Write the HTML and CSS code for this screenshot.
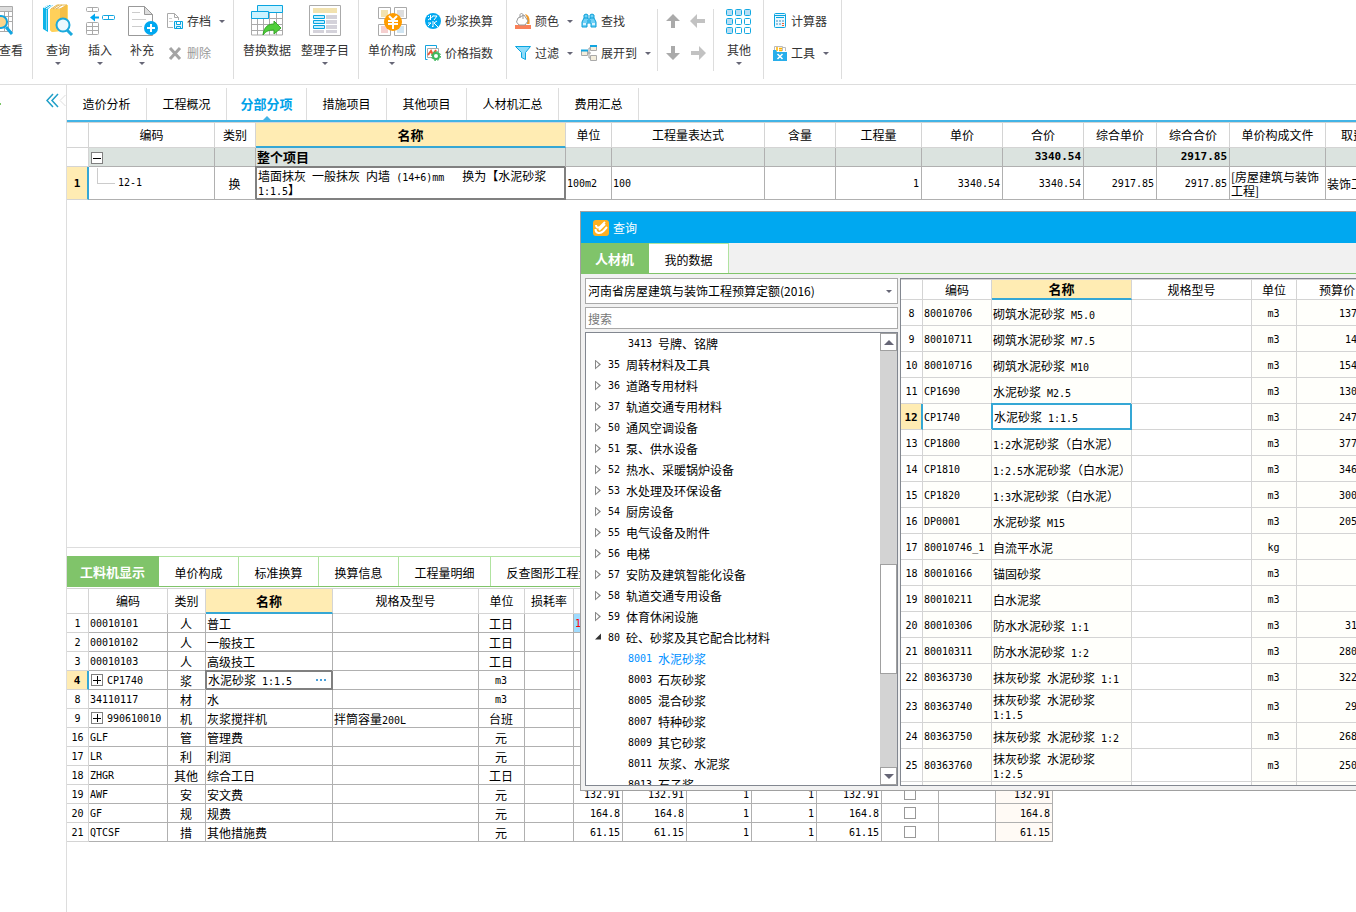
FILE: index.html
```html
<!DOCTYPE html>
<html lang="zh-CN">
<head>
  <meta charset="UTF-8">
  <meta name="viewport" content="width=device-width, initial-scale=1.0">
  <title>分部分项</title>
  <link rel="stylesheet" href="styles.css">
</head>
<body>

  <!-- toolbar -->
  <header class="ribbon">
    <div class="group first">
      <button class="big">
        <svg width="24" height="32" viewBox="0 0 24 32"><path d="M0 2.500h13.500v25H0M0 7.500h13M0 12.500h13M0 17.500h13M5.500 3v24M9.500 3v24" fill="none" stroke="#aaa"/><path d="M0 3h13v4H0z" fill="#ddd"/><circle cx="2" cy="18" r="6" fill="#fbd48a" stroke="#12a5e0" stroke-width="2"/><path d="M7 23l6 7" stroke="#12a5e0" stroke-width="3"/></svg>
        <span>查看</span>
      </button>
    </div>

    <div class="group g-query">
      <button class="big">
        <svg width="32" height="32" viewBox="0 0 32 32"><path d="M1 4l5-3h5l-5 4v23l-5-3z" fill="#0cb3e8"/><path d="M2 4l5-3M4 5l6-4" stroke="#fff"/><path d="M4.500 6v20" stroke="#7fdcf8"/><path d="M9 5l6-4h11v25l-16 2-2-2z" fill="#ffd869"/><path d="M9 5l6-4h10l-7 4z" fill="#fff" stroke="#e8b84d"/><path d="M8 5h10v22l-8 1-2-2z" fill="#ffd05a"/><path d="M18 5l7-4v24l-7 2z" fill="#f5bf48"/><path d="M11 5l6-4M14 5l6-4" stroke="#e0b050"/><circle cx="21" cy="21" r="6.500" fill="#eaf9ff" stroke="#1ba9dc" stroke-width="2"/><path d="M25 26l5 5" stroke="#1ba9dc" stroke-width="3"/></svg>
        <span>查询</span><i class="caret"></i>
      </button>
      <button class="big">
        <svg width="32" height="32" viewBox="0 0 32 32" fill="#fff" stroke="#aaa"><rect x="2.500" y="3.500" width="12" height="4" rx="1"/><path d="M8.500 3.500v4"/><rect x="2.500" y="18.500" width="12" height="12" rx="1"/><path d="M8.500 18.500v12M2.500 22.500h12M2.500 26.500h12"/><rect x="18.500" y="11.500" width="12" height="4" rx="1" stroke="#12a5e0"/><path d="M24.500 11.500v4" stroke="#12a5e0"/><path d="M6 13.500l5-4v3h4v2h-4v3z" fill="#00a8f0" stroke="none"/></svg>
        <span>插入</span><i class="caret"></i>
      </button>
      <button class="big">
        <svg width="32" height="32" viewBox="0 0 32 32"><path d="M2.500 2.500h16l8 8v21h-24z" fill="#fff" stroke="#999"/><path d="M18.500 2.500v8h8z" fill="#ddd" stroke="#999"/><path d="M6 8.500h8M6 15.500h14M6 22.500h10" stroke="#ccc"/><circle cx="25" cy="24" r="7" fill="#00a8f0"/><path d="M25 20v8M21 24h8" stroke="#fff" stroke-width="2"/></svg>
        <span>补充</span><i class="caret"></i>
      </button>
      <div class="small-col">
        <button class="small">
          <svg width="16" height="16" viewBox="0 0 16 16"><path d="M6 14.500H.5V.5h7l4 4V7M7.500.5v4h4" fill="none" stroke="#aaa"/><path d="M2 5.500h3M2 8.500h4" stroke="#ccc"/><path d="M7.500 8.500h8v7h-8zM9.500 8.500v3h4v-3M9.500 15.500v-2h4v2" fill="#e5f7ff" stroke="#0aa5e0"/></svg>
          <span>存档</span><i class="caret"></i>
        </button>
        <button class="small disabled">
          <svg width="16" height="16" viewBox="0 0 16 16"><path d="M3 3l10 11M13 3L3 14" stroke="#a4a4a4" stroke-width="3"/></svg>
          <span>删除</span>
        </button>
      </div>
    </div>

    <div class="group g-replace">
      <button class="big wide">
        <svg width="34" height="32" viewBox="0 0 34 32"><path d="M1.500 8.500h31M1.500 14.500h31M1.500 20.500h31M1.500 26.500h31M1.500 14v17h31V8M7.500 14v17M13.500 14v17M19.500 8v23M26.500 8v23" fill="none" stroke="#aaa"/><path d="M7.500 1.500h25v7h-25z" fill="#ccf3ff" stroke="#0aa5e0"/><path d="M1.500 7.500h17v7h-17z" fill="#ccf3ff" stroke="#0aa5e0"/><path d="M13 31c1-9 6-11 11-11v-3l7 7-7 6v-4c-5 0-8 1-11 5z" fill="#4fcf3a" stroke="#35a526"/></svg>
        <span>替换数据</span>
      </button>
      <button class="big wide">
        <svg width="32" height="32" viewBox="0 0 32 32"><path d="M.5 1.500h31v30H.5z" fill="#fff" stroke="#aaa"/><path d="M4 4h24v5H4z" fill="#f2e2af"/><path d="M17 11h11v4H17zM17 16h11v4H17zM17 21h11v4H17zM17 26h11v3H17zM4 26h11v3H4z" fill="#d4d2da"/><path d="M4.500 11.500h11v3h-11zM4.500 16.500h11v3h-11zM4.500 21.500h11v3h-11z" fill="#bfeeff" stroke="#0aa5e0"/></svg>
        <span>整理子目</span><i class="caret"></i>
      </button>
    </div>

    <div class="group g-price">
      <button class="big wide">
        <svg width="32" height="32" viewBox="0 0 32 32"><g fill="#fff" stroke="#aaa"><path d="M2.500 3.500h12v11h-12zM18.500 3.500h12v11h-12zM2.500 20.500h12v11h-12zM18.500 20.500h12v11h-12z"/></g><path d="M5 6h7v7H5z" fill="#f2e2af"/><path d="M21 6h7v7h-7z" fill="#ddd"/><path d="M5 22h7v7H5z" fill="#f5cfcf"/><path d="M21 22h7v7h-7z" fill="#cfe4f2"/><circle cx="17" cy="18" r="9" fill="#ff9c00"/><path d="M13 12l4 4 4-4M12 17h10M12 20h10M17 16v9" fill="none" stroke="#fff" stroke-width="2"/></svg>
        <span>单价构成</span><i class="caret"></i>
      </button>
      <div class="small-col">
        <button class="small">
          <svg width="16" height="16" viewBox="0 0 16 16"><circle cx="8" cy="8" r="8" fill="#00a8f0"/><path d="M5.500 2v5M3 3l1 1M3 7l2-1.500M8 2.500L6.500 5M8 3h4L9 7M8 8v6l-1-1M3 10h3l-3 3M12 8l-3 2 4 4" fill="none" stroke="#fff"/></svg>
          <span>砂浆换算</span>
        </button>
        <button class="small">
          <svg width="16" height="16" viewBox="0 0 16 16"><path d="M2.500 14.500h-2V.5h11v3" fill="none" stroke="#12a5e0"/><path d="M2.500 3.500h11v9h-11z" fill="#fff" stroke="#aaa"/><path d="M3 10l3-4 2 4 3-5" fill="none" stroke="#f05a3a" stroke-width="2"/><circle cx="11" cy="11" r="3" fill="#fff" stroke="#3fb85d" stroke-width="2"/><circle cx="11" cy="11" r="4.500" fill="none" stroke="#3fb85d" stroke-dasharray="2 1.500"/></svg>
          <span>价格指数</span>
        </button>
      </div>
    </div>

    <div class="group g-edit">
      <div class="small-col">
        <button class="small">
          <svg width="16" height="16" viewBox="0 0 16 16"><path d="M0 12h16v4H0z" fill="#f98058"/><path d="M10 1c4 1 5 4 4.500 10H12V5z" fill="#f09a2a"/><path d="M3 5l6-3 4 6-3 4H4L1.500 9z" fill="#fff" stroke="#999"/><path d="M5 5V2c0-2 3-2 3 0v4" fill="none" stroke="#999"/></svg>
          <span>颜色</span><i class="caret"></i>
        </button>
        <button class="small">
          <svg width="16" height="16" viewBox="0 0 16 16"><path d="M.5 1.500h15l-5 6v7l-4-2v-5z" fill="#8fdcfa" stroke="#0aa5e0"/></svg>
          <span>过滤</span><i class="caret"></i>
        </button>
      </div>
      <div class="small-col">
        <button class="small">
          <svg width="16" height="16" viewBox="0 0 16 16"><path d="M3 5V2l2-1 2 1v4h2V2l2-1 2 1v3l2 4v5h-5v-4H6v4H1V9z" fill="#6fd0f6" stroke="#0a9fd8"/><path d="M3 5h4M9 5h4M6 8h4" stroke="#0a9fd8"/><path d="M2 11h3M11 11h3" stroke="#d8f3ff" stroke-width="2"/></svg>
          <span>查找</span>
        </button>
        <button class="small">
          <svg width="16" height="16" viewBox="0 0 16 16"><path d="M6 8h4M8 3v10h2M8 3h2" fill="none" stroke="#999"/><path d="M.5 5.500h6v5h-6zM9.500.5h6v5h-6zM9.500 10.500h6v5h-6z" fill="#f4eedd" stroke="#aaa"/><path d="M0 5.500h7M9 1h7" stroke="#12a5e0" stroke-width="2"/></svg>
          <span>展开到</span><i class="caret"></i>
        </button>
      </div>
    </div>

    <div class="group arrows">
      <button class="arrow" aria-label="上移"><svg width="14" height="16" viewBox="0 0 14 16"><path d="M7 1l7 7h-5v7H5V8H0z" fill="#aaa"/></svg></button>
      <button class="arrow" aria-label="左移"><svg width="16" height="14" viewBox="0 0 16 14"><path d="M0 7l7-7v5h8v4H7v5z" fill="#c2c2c2"/></svg></button>
      <button class="arrow" aria-label="下移"><svg width="14" height="16" viewBox="0 0 14 16"><path d="M7 15l7-7h-5V1H5v7H0z" fill="#aaa"/></svg></button>
      <button class="arrow" aria-label="右移"><svg width="16" height="14" viewBox="0 0 16 14"><path d="M16 7L9 0v5H1v4h8v5z" fill="#c2c2c2"/></svg></button>
    </div>

    <div class="group g-other">
      <button class="big">
        <svg width="28" height="32" viewBox="0 0 28 32" fill="#fff" stroke="#12a9e2"><g fill="#b8def5"><rect x="1.500" y="5.500" width="6" height="6" rx="1"/><rect x="10.500" y="5.500" width="6" height="6" rx="1"/><rect x="19.500" y="5.500" width="6" height="6" rx="1"/><rect x="1.500" y="14.500" width="6" height="6" rx="1"/><rect x="1.500" y="23.500" width="6" height="6" rx="1"/></g><rect x="10.500" y="14.500" width="6" height="6" rx="1"/><rect x="19.500" y="14.500" width="6" height="6" rx="1"/><rect x="10.500" y="23.500" width="6" height="6" rx="1"/><rect x="19.500" y="23.500" width="6" height="6" rx="1"/></svg>
        <span>其他</span><i class="caret"></i>
      </button>
    </div>

    <div class="group g-tools">
      <div class="small-col">
        <button class="small">
          <svg width="14" height="16" viewBox="0 0 14 16"><rect x="1.500" y=".5" width="11" height="14" rx="1" fill="#e9f8ff" stroke="#0aa5e0"/><path d="M3 4.500h8M1 2.500h12" stroke="#0aa5e0"/><path d="M3 8h2M6 8h2M9 8h2M3 11h2M6 11h2" stroke="#3a8fc0"/><path d="M9 10.500h2M9 12.500h2" stroke="#f06030"/></svg>
          <span>计算器</span>
        </button>
        <button class="small">
          <svg width="14" height="16" viewBox="0 0 14 16"><path d="M1.500 6V1.500h8V6M9.500 2.500h3V6" fill="#fff" stroke="#bbb"/><path d="M4 2v4M6 3.500h3M6 5.500h3" stroke="#ffb400" stroke-width="1.500"/><path d="M0 5h3l1 2h10v9H0z" fill="#28aeea"/><path d="M4.500 9l5 5M9.500 9l-5 5" stroke="#fff" stroke-width="1.500"/></svg>
          <span>工具</span><i class="caret"></i>
        </button>
      </div>
    </div>
  </header>

  <div class="body">
    <aside class="side">
      <span class="mark"></span>
      <button class="collapse" aria-label="收起">
        <svg width="20" height="16" viewBox="0 0 20 16" fill="none"><path d="M7 1L1 7.500 7 14M12 1L6 7.500l6 6.500" stroke="#1f9fc8" stroke-width="1.500"/><path d="M19.500 2L14 7.500l5.500 5.500" stroke="#ddd"/></svg>
      </button>
    </aside>

    <main class="main">
      <section class="upper">
        <nav class="tabs">
          <button>造价分析</button>
          <button>工程概况</button>
          <button class="active">分部分项</button>
          <button>措施项目</button>
          <button>其他项目</button>
          <button class="w92">人材机汇总</button>
          <button>费用汇总</button>
        </nav>

        <table class="grid bill">
          <colgroup>
            <col class="c22"><col class="c126"><col class="c41"><col class="c310"><col class="c46"><col class="c153"><col class="c71"><col class="c86"><col class="c81"><col class="c81"><col class="c73"><col class="c73"><col class="c96"><col class="c79">
          </colgroup>
          <thead>
            <tr><th></th><th>编码</th><th>类别</th><th class="current">名称</th><th>单位</th><th>工程量表达式</th><th>含量</th><th>工程量</th><th>单价</th><th>合价</th><th>综合单价</th><th>综合合价</th><th>单价构成文件</th><th>取费专业</th></tr>
          </thead>
          <tbody>
            <tr class="total">
              <td class="idx"></td><td><i class="box minus"></i></td><td></td><td class="strong">整个项目</td><td></td><td></td><td></td><td></td><td></td><td class="r num">3340.54</td><td></td><td class="r num">2917.85</td><td></td><td></td>
            </tr>
            <tr class="item">
              <td class="idx on">1</td><td class="n"><i class="branch"></i>12-1</td><td class="c">换</td>
              <td class="picked">墙面抹灰<span class="n"> </span>一般抹灰<span class="n"> </span>内墙<span class="n"> (14+6)mm&nbsp;&nbsp; </span>换为【水泥砂浆<br><span class="n">1:1.5</span>】</td>
              <td class="n">100m2</td><td class="n">100</td><td></td><td class="r n">1</td><td class="r n">3340.54</td><td class="r n">3340.54</td><td class="r n">2917.85</td><td class="r n">2917.85</td><td class="file">[房屋建筑与装饰工程]</td><td>装饰工程</td>
            </tr>
          </tbody>
        </table>
      </section>

      <section class="lower">
        <nav class="tabs green">
          <button class="active w92">工料机显示</button>
          <button>单价构成</button>
          <button>标准换算</button>
          <button>换算信息</button>
          <button class="w92">工程量明细</button>
          <button class="w116">反查图形工程量</button>
        </nav>

        <table class="grid detail">
          <colgroup>
            <col class="c22"><col class="c79"><col class="c38"><col class="c127"><col class="c146"><col class="c46"><col class="c49"><col class="c49"><col class="c64"><col class="c65"><col class="c65"><col class="c65"><col class="c57"><col class="c57"><col class="c57">
          </colgroup>
          <thead>
            <tr><th></th><th>编码</th><th>类别</th><th class="current">名称</th><th>规格及型号</th><th>单位</th><th>损耗率</th><th></th><th colspan="7"></th></tr>
          </thead>
          <tbody>
            <tr><td class="idx">1</td><td class="n">00010101</td><td class="c">人</td><td>普工</td><td></td><td class="c">工日</td><td></td><td class="changed n">10.27</td><td colspan="7"></td></tr>
            <tr><td class="idx">2</td><td class="n">00010102</td><td class="c">人</td><td>一般技工</td><td></td><td class="c">工日</td><td></td><td></td><td colspan="7"></td></tr>
            <tr><td class="idx">3</td><td class="n">00010103</td><td class="c">人</td><td>高级技工</td><td></td><td class="c">工日</td><td></td><td></td><td colspan="7"></td></tr>
            <tr><td class="idx on">4</td><td class="n"><i class="box plus"></i>CP1740</td><td class="c">浆</td><td class="picked"><div class="edit"><span>水泥砂浆<span class="n"> 1:1.5</span></span><button class="more" aria-label="更多"><i></i><i></i><i></i></button></div></td><td></td><td class="c n">m3</td><td></td><td></td><td colspan="7"></td></tr>
            <tr><td class="idx">8</td><td class="n">34110117</td><td class="c">材</td><td>水</td><td></td><td class="c n">m3</td><td></td><td></td><td colspan="7"></td></tr>
            <tr><td class="idx">9</td><td class="n"><i class="box plus"></i>990610010</td><td class="c">机</td><td>灰浆搅拌机</td><td>拌筒容量<span class="n">200L</span></td><td class="c">台班</td><td></td><td></td><td colspan="7"></td></tr>
            <tr><td class="idx">16</td><td class="n">GLF</td><td class="c">管</td><td>管理费</td><td></td><td class="c">元</td><td></td><td></td><td colspan="7"></td></tr>
            <tr><td class="idx">17</td><td class="n">LR</td><td class="c">利</td><td>利润</td><td></td><td class="c">元</td><td></td><td></td><td colspan="7"></td></tr>
            <tr><td class="idx">18</td><td class="n">ZHGR</td><td class="c">其他</td><td>综合工日</td><td></td><td class="c">工日</td><td></td><td></td><td colspan="7"></td></tr>
            <tr><td class="idx">19</td><td class="n">AWF</td><td class="c">安</td><td>安文费</td><td></td><td class="c">元</td><td></td><td class="r n">132.91</td><td class="r n">132.91</td><td class="r n">1</td><td class="r n">1</td><td class="r n">132.91</td><td class="c"><input type="checkbox" aria-label="安文费"></td><td></td><td class="r n sum">132.91</td></tr>
            <tr><td class="idx">20</td><td class="n">GF</td><td class="c">规</td><td>规费</td><td></td><td class="c">元</td><td></td><td class="r n">164.8</td><td class="r n">164.8</td><td class="r n">1</td><td class="r n">1</td><td class="r n">164.8</td><td class="c"><input type="checkbox" aria-label="规费"></td><td></td><td class="r n sum">164.8</td></tr>
            <tr><td class="idx">21</td><td class="n">QTCSF</td><td class="c">措</td><td>其他措施费</td><td></td><td class="c">元</td><td></td><td class="r n">61.15</td><td class="r n">61.15</td><td class="r n">1</td><td class="r n">1</td><td class="r n">61.15</td><td class="c"><input type="checkbox" aria-label="其他措施费"></td><td></td><td class="r n sum">61.15</td></tr>
          </tbody>
        </table>
      </section>
    </main>
  </div>

  <!-- query window -->
  <div class="dialog" role="dialog" aria-labelledby="dialog-title">
    <div class="titlebar">
      <svg width="16" height="16" viewBox="0 0 16 16"><rect width="16" height="16" rx="3" fill="#ffb020"/><path d="M3 5c0 3 2 3 4 2l5-5M2.500 9c0 5 5 5 8 2l3.500-4M6 10l6-6" fill="none" stroke="#fff" stroke-width="2"/></svg>
      <span id="dialog-title">查询</span>
    </div>
    <nav class="tabs green dialog-tabs">
      <button class="active w68">人材机</button>
      <button>我的数据</button>
    </nav>

    <div class="panes">
      <div class="left">
        <div class="combo">
          <select aria-label="定额库">
            <option>河南省房屋建筑与装饰工程预算定额(2016)</option>
          </select>
          <i class="caret"></i>
        </div>
        <input class="search" type="text" placeholder="搜索" aria-label="搜索">
        <div class="tree-box">
          <ul class="tree">
            <li class="leaf"><span class="n">3413 </span>号牌、铭牌</li>
            <li><span class="n">35 </span>周转材料及工具</li>
            <li><span class="n">36 </span>道路专用材料</li>
            <li><span class="n">37 </span>轨道交通专用材料</li>
            <li><span class="n">50 </span>通风空调设备</li>
            <li><span class="n">51 </span>泵、供水设备</li>
            <li><span class="n">52 </span>热水、采暖锅炉设备</li>
            <li><span class="n">53 </span>水处理及环保设备</li>
            <li><span class="n">54 </span>厨房设备</li>
            <li><span class="n">55 </span>电气设备及附件</li>
            <li><span class="n">56 </span>电梯</li>
            <li><span class="n">57 </span>安防及建筑智能化设备</li>
            <li><span class="n">58 </span>轨道交通专用设备</li>
            <li><span class="n">59 </span>体育休闲设施</li>
            <li class="open"><span class="n">80 </span>砼、砂浆及其它配合比材料</li>
            <li class="leaf selected"><span class="n">8001 </span>水泥砂浆</li>
            <li class="leaf"><span class="n">8003 </span>石灰砂浆</li>
            <li class="leaf"><span class="n">8005 </span>混合砂浆</li>
            <li class="leaf"><span class="n">8007 </span>特种砂浆</li>
            <li class="leaf"><span class="n">8009 </span>其它砂浆</li>
            <li class="leaf"><span class="n">8011 </span>灰浆、水泥浆</li>
            <li class="leaf"><span class="n">8013 </span>石子浆</li>
          </ul>
          <div class="scrollbar">
            <button class="step" aria-label="向上滚动"><i class="up"></i></button>
            <div class="track-top"></div>
            <div class="thumb"></div>
            <div class="track-bottom"></div>
            <button class="step" aria-label="向下滚动"><i class="down"></i></button>
          </div>
        </div>
      </div>

      <div class="right">
        <table class="grid list">
          <colgroup>
            <col class="c22"><col class="c69"><col class="c140"><col class="c120"><col class="c45"><col class="c81">
          </colgroup>
          <thead>
            <tr><th></th><th>编码</th><th class="current">名称</th><th>规格型号</th><th>单位</th><th>预算价</th></tr>
          </thead>
          <tbody>
            <tr><td class="idx">8</td><td class="n">80010706</td><td>砌筑水泥砂浆<span class="n"> M5.0</span></td><td class="blank"></td><td class="c n">m3</td><td class="r n">137.36</td></tr>
            <tr><td class="idx">9</td><td class="n">80010711</td><td>砌筑水泥砂浆<span class="n"> M7.5</span></td><td class="blank"></td><td class="c n">m3</td><td class="r n">145.9</td></tr>
            <tr><td class="idx">10</td><td class="n">80010716</td><td>砌筑水泥砂浆<span class="n"> M10</span></td><td class="blank"></td><td class="c n">m3</td><td class="r n">154.21</td></tr>
            <tr><td class="idx">11</td><td class="n">CP1690</td><td>水泥砂浆<span class="n"> M2.5</span></td><td class="blank"></td><td class="c n">m3</td><td class="r n">130.15</td></tr>
            <tr><td class="idx on">12</td><td class="n">CP1740</td><td class="picked">水泥砂浆<span class="n"> 1:1.5</span></td><td class="blank"></td><td class="c n">m3</td><td class="r n">247.43</td></tr>
            <tr><td class="idx">13</td><td class="n">CP1800</td><td><span class="n">1:2</span>水泥砂浆（白水泥）</td><td class="blank"></td><td class="c n">m3</td><td class="r n">377.24</td></tr>
            <tr><td class="idx">14</td><td class="n">CP1810</td><td><span class="n">1:2.5</span>水泥砂浆（白水泥）</td><td class="blank"></td><td class="c n">m3</td><td class="r n">346.18</td></tr>
            <tr><td class="idx">15</td><td class="n">CP1820</td><td><span class="n">1:3</span>水泥砂浆（白水泥）</td><td class="blank"></td><td class="c n">m3</td><td class="r n">300.62</td></tr>
            <tr><td class="idx">16</td><td class="n">DP0001</td><td>水泥砂浆<span class="n"> M15</span></td><td class="blank"></td><td class="c n">m3</td><td class="r n">205.34</td></tr>
            <tr><td class="idx">17</td><td class="n">80010746_1</td><td>自流平水泥</td><td class="blank"></td><td class="c n">kg</td><td class="r n">2</td></tr>
            <tr><td class="idx">18</td><td class="n">80010166</td><td>锚固砂浆</td><td class="blank"></td><td class="c n">m3</td><td class="r n">0</td></tr>
            <tr><td class="idx">19</td><td class="n">80010211</td><td>白水泥浆</td><td class="blank"></td><td class="c n">m3</td><td class="r n">0</td></tr>
            <tr><td class="idx">20</td><td class="n">80010306</td><td>防水水泥砂浆<span class="n"> 1:1</span></td><td class="blank"></td><td class="c n">m3</td><td class="r n">312.7</td></tr>
            <tr><td class="idx">21</td><td class="n">80010311</td><td>防水水泥砂浆<span class="n"> 1:2</span></td><td class="blank"></td><td class="c n">m3</td><td class="r n">280.15</td></tr>
            <tr><td class="idx">22</td><td class="n">80363730</td><td>抹灰砂浆<span class="n"> </span>水泥砂浆<span class="n"> 1:1</span></td><td class="blank"></td><td class="c n">m3</td><td class="r n">322.41</td></tr>
            <tr class="tall"><td class="idx">23</td><td class="n">80363740</td><td>抹灰砂浆<span class="n"> </span>水泥砂浆<br><span class="n">1:1.5</span></td><td class="blank"></td><td class="c n">m3</td><td class="r n">293.6</td></tr>
            <tr><td class="idx">24</td><td class="n">80363750</td><td>抹灰砂浆<span class="n"> </span>水泥砂浆<span class="n"> 1:2</span></td><td class="blank"></td><td class="c n">m3</td><td class="r n">268.12</td></tr>
            <tr class="tall"><td class="idx">25</td><td class="n">80363760</td><td>抹灰砂浆<span class="n"> </span>水泥砂浆<br><span class="n">1:2.5</span></td><td class="blank"></td><td class="c n">m3</td><td class="r n">250.33</td></tr>
            <tr><td class="idx"></td><td></td><td></td><td class="blank"></td><td></td><td></td></tr>
          </tbody>
        </table>
      </div>
    </div>
  </div>

</body>
</html>
```
FILE: styles.css
```css
* {
  box-sizing: border-box;
}
body {
  margin: 0;
  height: 100vh;
  display: flex;
  flex-direction: column;
  position: relative;
  overflow: hidden;
  background: #fff;
  color: #000;
  font-family: "Noto Sans CJK SC", sans-serif;
  font-size: 12px;
  line-height: 14px;
}
button, input, select {
  font: inherit;
  color: inherit;
}
button {
  border: 0;
  padding: 0;
  background: none;
  white-space: nowrap;
}
.n {
  font-family: "DejaVu Sans Mono", monospace;
  font-size: 10px;
}
span.n {
  line-height: 10px;
}
.caret {
  width: 0;
  height: 0;
  border: 3px solid transparent;
  border-top-color: #666676;
  border-bottom: 0;
}

/* toolbar */
.ribbon {
  flex: none;
  display: flex;
  height: 85px;
  border-bottom: 1px solid #ddd;
  color: #333;
}
.group {
  flex: none;
  display: flex;
  height: 79px;
  border-right: 1px solid #ddd;
}
.first {
  width: 33px;
}
.first .big {
  width: 24px;
  margin-left: -1px;
}
.g-query {
  width: 201px;
  padding-left: 4px;
}
.g-replace {
  width: 125px;
  padding-left: 4px;
}
.g-price {
  width: 148px;
  padding-left: 4px;
}
.g-edit {
  width: 150px;
  padding-left: 4px;
  border-right: 0;
}
.g-other {
  width: 50px;
  padding-left: 4px;
}
.g-tools {
  width: 78px;
  padding-left: 5px;
}
.big {
  flex: none;
  display: flex;
  flex-direction: column;
  align-items: center;
  width: 42px;
  height: 70px;
  padding-top: 4px;
}
.big.wide {
  width: 58px;
}
.big span {
  line-height: 20px;
  padding-top: 4px;
}
.big .caret {
  margin-top: 2px;
}
.small-col {
  display: flex;
  flex-direction: column;
  gap: 12px;
  padding: 11px 0 0 4px;
}
.small {
  display: flex;
  align-items: center;
  gap: 4px;
  height: 20px;
}
.small .caret {
  margin-left: 4px;
}
.disabled {
  color: #999;
}
.g-edit .small-col + .small-col {
  padding-left: 8px;
}
.arrows {
  display: grid;
  grid-template-columns: 25px 25px;
  grid-template-rows: 30px 34px;
  width: 57px;
  height: 62px;
  margin-top: 9px;
  padding-left: 2px;
  border-left: 1px solid #ddd;
}
.arrow {
  display: flex;
  align-items: center;
  justify-content: center;
  height: 24px;
}
.arrows .arrow:nth-child(n+3) {
  margin-top: 2px;
}

/* page body */
.body {
  flex: 1;
  display: flex;
  min-height: 0;
}
.side {
  flex: none;
  display: flex;
  align-items: flex-start;
  justify-content: space-between;
  width: 67px;
  padding-top: 8px;
  border-right: 1px solid #ddd;
}
.mark {
  width: 1px;
  height: 2px;
  margin-top: 10px;
  background: #7cc66a;
}
.collapse {
  height: 16px;
}
.main {
  flex: 1;
  display: flex;
  flex-direction: column;
  min-width: 0;
}
.upper {
  flex: 1;
  min-height: 0;
  padding-top: 3px;
  overflow: hidden;
}
.lower {
  flex: none;
  height: 365px;
  padding-top: 8px;
  border-top: 1px solid #ddd;
  overflow: hidden;
}

/* tabs */
.tabs {
  display: flex;
  height: 34px;
  border-bottom: 2px solid #42b4e6;
}
.tabs button {
  flex: none;
  width: 80px;
  border-right: 1px solid #ddd;
}
.tabs button.w68 {
  width: 68px;
}
.tabs button.w92 {
  width: 92px;
}
.tabs button.w116 {
  width: 116px;
}
.tabs .active {
  position: relative;
  color: #00a2e8;
  font-size: 13px;
  font-weight: bold;
}
.tabs .active::after {
  content: "";
  position: absolute;
  left: 36px;
  bottom: 0;
  border: 4px solid transparent;
  border-top: 0;
  border-bottom-color: #42b4e6;
}
.tabs.green {
  height: 31px;
  border-bottom: 1px solid #80c46a;
}
.tabs.green button {
  border-top: 1px solid #b0e3a0;
  border-right-color: #b0e3a0;
  padding-top: 2px;
  background: #fff;
}
.tabs.green .active {
  padding-top: 0;
  background: #80c46a;
  border-color: #80c46a;
  color: #fff;
}
.tabs.green .active::after {
  content: none;
}

/* grids */
.grid {
  table-layout: fixed;
  border-collapse: separate;
  border-spacing: 0;
  width: 0;
  margin-top: 1px;
  border-top: 1px solid #d4d4d4;
}
.bill {
  margin-top: 0;
}
.c22 { width: 22px; }
.c38 { width: 38px; }
.c41 { width: 41px; }
.c45 { width: 45px; }
.c46 { width: 46px; }
.c49 { width: 49px; }
.c57 { width: 57px; }
.c64 { width: 64px; }
.c65 { width: 65px; }
.c69 { width: 69px; }
.c71 { width: 71px; }
.c73 { width: 73px; }
.c79 { width: 79px; }
.c81 { width: 81px; }
.c86 { width: 86px; }
.c96 { width: 96px; }
.c120 { width: 120px; }
.c126 { width: 126px; }
.c127 { width: 127px; }
.c140 { width: 140px; }
.c146 { width: 146px; }
.c153 { width: 153px; }
.c310 { width: 310px; }
.grid th {
  height: 25px;
  padding: 0;
  font-weight: normal;
  white-space: nowrap;
  border-right: 1px solid #d4d4d4;
  border-bottom: 1px solid #d4d4d4;
}
.grid th.current {
  background: #ffecb3;
  border-bottom: 2px solid #35a7d5;
  font-size: 13px;
  font-weight: bold;
}
.grid td {
  height: 19px;
  padding: 2px 2px 0 1px;
  border-right: 1px solid #b0b0b0;
  border-bottom: 1px solid #b0b0b0;
  white-space: nowrap;
}
.grid .c {
  text-align: center;
}
.grid .r {
  text-align: right;
}
.grid .idx {
  padding: 2px 0 0;
  text-align: center;
  font-family: "DejaVu Sans Mono", monospace;
  font-size: 10px;
  border-color: #d4d4d4;
}
.grid .idx.on {
  background: #ffecb3;
  border-right: 2px solid #35a7d5;
  font-size: 11px;
  font-weight: bold;
}
.grid td.picked {
  border: solid #808080;
  border-width: 1px 2px 2px 1px;
  box-shadow: -1px -1px 0 #808080;
  padding: 0 0 0 1px;
}
.bill .total td {
  padding-top: 0;
  background: #dbe3df;
}
.bill .total .idx {
  background: #fff;
}
.bill .item td {
  height: 33px;
}
.grid td.strong {
  font-size: 13px;
  font-weight: bold;
}
.grid td.num {
  font-family: "DejaVu Sans Mono", monospace;
  font-size: 11px;
  font-weight: bold;
}
.grid td.file {
  white-space: normal;
}
.box {
  display: inline-block;
  vertical-align: middle;
  width: 12px;
  height: 12px;
  margin: -2px 4px 0 1px;
  border: 1px solid #808080;
  background:
    linear-gradient(#000, #000) center / 8px 2px no-repeat,
    #fff;
}
.box.plus {
  background:
    linear-gradient(#000, #000) 1px 5px / 8px 1px no-repeat,
    linear-gradient(#000, #000) 5px 1px / 1px 8px no-repeat,
    #fff;
}
.box.minus {
  background:
    linear-gradient(#000, #000) 1px 5px / 8px 1px no-repeat,
    #fff;
}
.bill .item td:nth-child(2) {
  padding-top: 0;
}
.branch {
  display: inline-block;
  vertical-align: middle;
  width: 18px;
  height: 16px;
  margin: 0 3px 14px 7px;
  border-left: 1px solid #ccc;
  border-bottom: 1px solid #ccc;
}
.detail td.changed {
  background: #a0dcff;
  color: #f00;
}
.detail td.sum {
  background: #fffaf5;
}
.detail input {
  appearance: none;
  display: block;
  width: 12px;
  height: 12px;
  margin: -2px auto 0;
  border: 1px solid #999;
  background: #fff;
}
.edit {
  display: flex;
  justify-content: space-between;
}
.more {
  display: flex;
  align-items: center;
  gap: 2px;
  padding-right: 5px;
}
.more i {
  width: 2px;
  height: 2px;
  background: #4a9fd8;
}

/* query window */
.dialog {
  position: absolute;
  left: 580px;
  right: 0;
  top: 211px;
  height: 580px;
  display: flex;
  flex-direction: column;
  border: 1px solid #a0a0a0;
  border-right: 0;
  background: #f1f1f1;
  overflow: hidden;
}
.titlebar {
  flex: none;
  display: flex;
  align-items: center;
  gap: 4px;
  height: 31px;
  padding-left: 12px;
  background: #00a8f0;
  color: #fff;
}
.dialog-tabs {
  flex: none;
}
.panes {
  flex: 1;
  display: flex;
  gap: 2px;
  min-height: 0;
  padding: 4px 0 4px 4px;
}
.left {
  flex: none;
  display: flex;
  flex-direction: column;
  width: 313px;
}
.combo {
  display: flex;
  align-items: center;
  height: 26px;
  padding-right: 5px;
  border: 1px solid #a9a9a9;
  background: #fff;
}
.combo select {
  flex: 1;
  appearance: none;
  border: 0;
  padding: 0 2px;
  background: none;
}
.search {
  height: 22px;
  margin: 3px 0;
  padding: 0 2px;
  border: 1px solid #a9a9a9;
  border-radius: 0;
  background: #fff;
}
.search::placeholder {
  color: #777;
}
.tree-box {
  flex: 1;
  display: flex;
  min-height: 0;
  border: 1px solid #828790;
  background: #fff;
}
.tree {
  flex: 1;
  margin: 0;
  padding: 0;
  list-style: none;
  overflow: hidden;
}
.tree li {
  display: flex;
  align-items: center;
  height: 21px;
  padding-left: 9px;
}
.tree li .n {
  white-space: pre;
}
.tree li::before {
  content: "";
  width: 6px;
  height: 10px;
  margin-right: 7px;
  background: #888;
  clip-path: path(evenodd, "M0 0 L6 5 L0 10 Z M1 2 L1 8 L4 5 Z");
}
.tree li.open::before {
  background: #333;
  clip-path: polygon(100% 10%, 100% 70%, 0 70%);
}
.tree li.leaf {
  padding-left: 42px;
}
.tree li.leaf::before {
  content: none;
}
.tree .selected {
  color: #0090ff;
}
.scrollbar {
  flex: none;
  display: flex;
  flex-direction: column;
  width: 17px;
  background: #d3d3d3;
}
.step {
  flex: none;
  display: flex;
  align-items: center;
  justify-content: center;
  height: 18px;
  border: 1px solid #a0a0a0;
  background: #fff;
}
.up, .down {
  border: 5px solid transparent;
}
.up {
  border-top: 0;
  border-bottom-color: #666676;
}
.down {
  border-bottom: 0;
  border-top-color: #666676;
}
.track-top {
  flex: 214;
}
.track-bottom {
  flex: 93;
}
.thumb {
  flex: none;
  height: 110px;
  border: 1px solid #a0a0a0;
  background: #fff;
}
.right {
  flex: 1;
  min-width: 0;
  border: 1px solid #828790;
  border-right: 0;
  background: #fff;
  overflow: hidden;
}
.list {
  margin-top: 0;
}
.list th {
  height: 20px;
}
.list td {
  height: 26px;
  background: #fffffb;
  border-color: #d4d4d4;
}
.list td.idx, .list td.blank {
  background: #fff;
}
.list td.idx.on {
  background: #ffecb3;
}
.list .tall td {
  height: 33px;
}
.list td.picked {
  border-color: #35a7d5;
  box-shadow: -1px -1px 0 #35a7d5;
  background: #fff;
}
```
